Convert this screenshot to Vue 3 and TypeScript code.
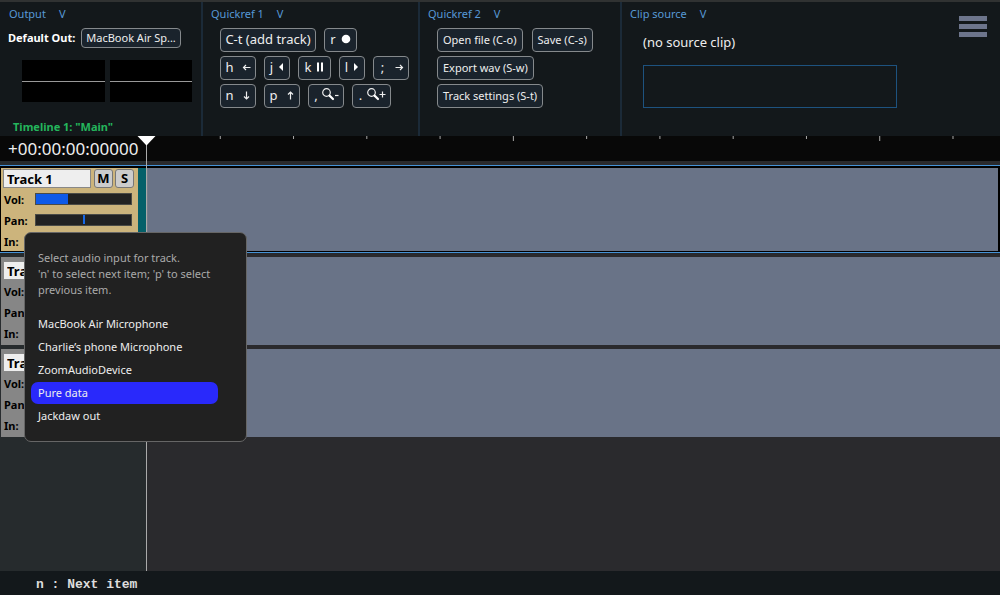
<script setup lang="ts">
import { ref } from 'vue'

type Glyph = 'record' | 'left' | 'back' | 'pause' | 'play' | 'right' | 'down' | 'up' | 'zoomOut' | 'zoomIn'

interface Key {
  key: string
  glyph?: Glyph
  label: string
  size: string
}

interface Track {
  name: string
  volume: number
  pan: number
}

const transportRows: Key[][] = [
  [
    { key: 'C-t (add track)', label: 'Add track', size: 'wide' },
    { key: 'r', glyph: 'record', label: 'Record', size: 'medium' },
  ],
  [
    { key: 'h', glyph: 'left', label: 'Move left', size: 'large' },
    { key: 'j', glyph: 'back', label: 'Play backward', size: 'small' },
    { key: 'k', glyph: 'pause', label: 'Pause', size: 'medium' },
    { key: 'l', glyph: 'play', label: 'Play', size: 'small' },
    { key: ';', glyph: 'right', label: 'Move right', size: 'large' },
  ],
  [
    { key: 'n', glyph: 'down', label: 'Next track', size: 'large' },
    { key: 'p', glyph: 'up', label: 'Previous track', size: 'large' },
    { key: ',', glyph: 'zoomOut', label: 'Zoom out', size: 'large' },
    { key: '.', glyph: 'zoomIn', label: 'Zoom in', size: 'xlarge' },
  ],
]

const fileRows: string[][] = [
  ['Open file (C-o)', 'Save (C-s)'],
  ['Export wav (S-w)'],
  ['Track settings (S-t)'],
]

const tracks = ref<Track[]>([
  { name: 'Track 1', volume: 34, pan: 50 },
  { name: 'Track 2', volume: 34, pan: 50 },
  { name: 'Track 3', volume: 34, pan: 50 },
])
const activeTrack = ref(0)

const inputs: string[] = [
  'MacBook Air Microphone',
  'Charlie’s phone Microphone',
  'ZoomAudioDevice',
  'Pure data',
  'Jackdaw out',
]
const selectedInput = ref(3)

const tickSpacing = 8.59
const ticks = Array.from({ length: 11 }, (_, i) => ({
  x: `${((i + 1) * tickSpacing).toFixed(2)}%`,
  length: (i + 1) % 5 === 0 ? 5 : 3,
}))
</script>

<template>
  <main class="app">
    <header class="panels">
      <section class="panel output">
        <h2 class="panel-title">Output <button class="chevron" aria-label="Choose panel">V</button></h2>
        <div class="default-out">
          <span id="default-out">Default Out:</span>
          <button class="key device" aria-describedby="default-out">MacBook Air Sp...</button>
        </div>
        <div class="meters">
          <div class="meter"></div>
          <div class="meter"></div>
        </div>
        <p class="timeline-name">Timeline 1: "Main"</p>
      </section>

      <section class="panel quick-one">
        <h2 class="panel-title">Quickref 1 <button class="chevron" aria-label="Choose panel">V</button></h2>
        <div class="key-rows">
          <div v-for="(row, r) in transportRows" :key="r" class="key-row">
            <button v-for="k in row" :key="k.key" class="key" :class="k.size" :aria-label="k.label">
              <span>{{ k.key }}</span>
              <svg v-if="k.glyph === 'record'" width="10" height="10" viewBox="0 0 10 10"><circle cx="5" cy="5" r="4.3" fill="#fff" /></svg>
              <svg v-else-if="k.glyph === 'back'" width="6" height="10" viewBox="0 0 6 10"><path d="M5 1v8L1 5z" fill="#fff" /></svg>
              <svg v-else-if="k.glyph === 'play'" width="6" height="10" viewBox="0 0 6 10"><path d="M1 1v8L5 5z" fill="#fff" /></svg>
              <svg v-else-if="k.glyph === 'pause'" width="8" height="10" viewBox="0 0 8 10"><path d="M1 .5h2v9H1zM5 .5h2v9H5z" fill="#fff" /></svg>
              <svg v-else-if="k.glyph === 'left'" width="9" height="9" viewBox="0 0 9 9"><path d="M8.500 4.500H1.500M4 2L1.500 4.500 4 7" class="stroke" /></svg>
              <svg v-else-if="k.glyph === 'right'" width="9" height="9" viewBox="0 0 9 9"><path d="M.5 4.500H7.500M5 2l2.500 2.500L5 7" class="stroke" /></svg>
              <svg v-else-if="k.glyph === 'down'" width="9" height="9" viewBox="0 0 9 9"><path d="M4.500 .5V8M2 5.500L4.500 8 7 5.500" class="stroke" /></svg>
              <svg v-else-if="k.glyph === 'up'" width="9" height="9" viewBox="0 0 9 9"><path d="M4.500 8.500V1M2 3.500L4.500 1 7 3.500" class="stroke" /></svg>
              <svg v-else-if="k.glyph" class="lens" :width="k.glyph === 'zoomIn' ? 20 : 18" height="14" :viewBox="k.glyph === 'zoomIn' ? '0 0 20 14' : '0 0 18 14'">
                <circle cx="4.500" cy="4.500" r="3.800" class="stroke" />
                <path d="M7.500 7.500L11 11" stroke="#fff" stroke-width="2.200" stroke-linecap="round" />
                <path v-if="k.glyph === 'zoomIn'" d="M12.500 6.500h6M15.500 3.500v6" class="stroke" />
                <path v-else d="M13 7.500h3.500" class="stroke" />
              </svg>
            </button>
          </div>
        </div>
      </section>

      <section class="panel quick-two">
        <h2 class="panel-title">Quickref 2 <button class="chevron" aria-label="Choose panel">V</button></h2>
        <div class="key-rows">
          <div v-for="(row, r) in fileRows" :key="r" class="key-row">
            <button v-for="label in row" :key="label" class="key">{{ label }}</button>
          </div>
        </div>
      </section>

      <section class="panel clip">
        <div class="clip-main">
          <h2 class="panel-title">Clip source <button class="chevron" aria-label="Choose panel">V</button></h2>
          <p class="clip-name">(no source clip)</p>
          <div class="clip-view"></div>
        </div>
        <button class="menu" aria-label="Menu"><i></i><i></i><i></i></button>
      </section>
    </header>

    <section class="timeline">
      <div class="ruler">
        <output class="timecode">+00:00:00:00000</output>
        <svg class="ticks" width="100%" height="25">
          <line v-for="t in ticks" :key="t.x" :x1="t.x" :x2="t.x" y1="0" :y2="t.length" stroke="#aaa" />
        </svg>
      </div>

      <div class="tracks">
        <article v-for="(track, i) in tracks" :key="i" class="track" :class="{ active: i === activeTrack }">
          <div class="controls">
            <div class="name-row">
              <input v-model="track.name" class="name" type="text" aria-label="Track name" />
              <button class="toggle" aria-label="Mute">M</button>
              <button class="toggle" aria-label="Solo">S</button>
            </div>
            <label class="control">
              <span>Vol:</span>
              <input v-model.number="track.volume" class="slider volume" type="range" min="0" max="100" :style="{ '--level': track.volume + '%' }" />
            </label>
            <label class="control">
              <span>Pan:</span>
              <input v-model.number="track.pan" class="slider" type="range" min="0" max="100" />
            </label>
            <div class="control"><span>In:</span></div>
          </div>
          <div class="strip"></div>
          <div class="lane"></div>
        </article>
      </div>

      <div class="playhead">
        <svg width="19" height="10" viewBox="0 0 19 10"><path d="M.5 0h18l-9 9.500z" fill="#fff" /></svg>
      </div>

      <div class="popup" role="dialog" aria-labelledby="popup-help">
        <p id="popup-help" class="help">Select audio input for track.<br />'n' to select next item; 'p' to select previous item.</p>
        <ul class="choices">
          <li v-for="(name, i) in inputs" :key="name">
            <button class="choice" :class="{ selected: i === selectedInput }" @click="selectedInput = i">{{ name }}</button>
          </li>
        </ul>
      </div>
    </section>

    <footer class="status">n : Next item</footer>
  </main>
</template>

<style>
body {
  background: #13181b;
}
</style>

<style scoped>
* {
  box-sizing: border-box;
}

.app {
  display: flex;
  flex-direction: column;
  min-height: 100vh;
  background: #13181b;
  color: #eee;
  font: 11px/16px "Noto Sans", "Open Sans", sans-serif;
}

button,
input {
  margin: 0;
  padding: 0;
  border: 0;
  background: none;
  color: inherit;
  font: inherit;
}

p,
h2,
ul {
  margin: 0;
  padding: 0;
}

.panels {
  display: grid;
  grid-template-columns: 203px 217px 202px 1fr;
  height: 136px;
  border-top: 2px solid #303232;
}

.panel {
  padding: 4px 8px 0;
  border-right: 2px solid #1b2a38;
}

.panel-title {
  display: flex;
  gap: 13px;
  color: #5799d6;
  font-size: 11px;
  font-weight: 400;
  line-height: 16px;
}

.output .panel-title {
  padding-left: 1px;
}

.default-out {
  display: flex;
  align-items: center;
  gap: 6px;
  margin-top: 6px;
  color: #fff;
  font-weight: 700;
}

.key {
  display: flex;
  align-items: center;
  justify-content: center;
  height: 24px;
  padding: 0 5px;
  border: 1px solid #85898c;
  border-radius: 4px;
  background: #1a232c;
  color: #eee;
  font-weight: 400;
  white-space: nowrap;
}

.device {
  height: 20px;
  padding: 0 4px;
}

.meters {
  display: grid;
  grid-template-columns: 1fr 1fr;
  gap: 5px;
  margin: 12px 1px 0 14px;
}

.meter {
  display: flex;
  align-items: center;
  height: 42px;
  background: #000;
}

.meter::before {
  flex: 1;
  height: 1px;
  background: #999;
  content: "";
}

.timeline-name {
  margin: 17px 0 0 5px;
  color: #24b55c;
  font-weight: 700;
}

.key-rows {
  display: grid;
  gap: 4px;
  margin: 6px 0 0 9px;
}

.key-row {
  display: flex;
  gap: 8px;
}

.quick-two .key-row {
  gap: 9px;
}

.quick-one .key {
  gap: 5px;
  padding: 0 0 2px;
  font-size: 13px;
}

.wide {
  width: 96px;
}

.small {
  width: 26px;
}

.medium {
  width: 33px;
}

.large {
  width: 36px;
}

.xlarge {
  width: 39px;
}

.quick-one .large,
.quick-one .xlarge {
  gap: 8px;
}

.large span,
.xlarge span {
  width: 8px;
}

.lens {
  margin-left: -6px;
}

.stroke {
  fill: none;
  stroke: #eee;
  stroke-width: 1.2;
}

.clip {
  display: flex;
  justify-content: space-between;
  padding-right: 13px;
  border: 0;
}

.clip-main {
  width: 267px;
}

.clip-name {
  margin: 12px 0 0 13px;
  font-size: 13px;
}

.clip-view {
  height: 43px;
  margin: 15px 0 0 13px;
  border: 1px solid #1d527f;
}

.menu {
  display: flex;
  flex-direction: column;
  gap: 3px;
  width: 28px;
  height: 21px;
  margin-top: 10px;
}

.menu i {
  width: 100%;
  height: 5px;
  background: #6d758c;
}

.timeline {
  position: relative;
  flex: 1;
  background: linear-gradient(90deg, #262b2d 147px, #2a2a2d 147px);
}

.ruler {
  display: grid;
  grid-template-columns: 147px 1fr;
  height: 25px;
  background: #080808;
}

.timecode {
  padding-left: 8px;
  color: #eee;
  font-size: 17px;
  line-height: 26px;
}

.tracks {
  display: grid;
  gap: 4px;
  padding-top: 4px;
}

.track {
  display: grid;
  grid-template-columns: 137px 9px 1fr;
  height: 88px;
  padding-left: 1px;
  background: #282c2f;
}

.track.active {
  padding: 2px 2px 1px 1px;
  border: solid #4592d6;
  border-width: 1px 0;
  background: #000;
}

.controls {
  padding: 4px 2px 0;
  background: #868686;
  color: #000;
  font-weight: 700;
}

.active .controls {
  padding-top: 1px;
  background: #ccb47c;
}

.strip {
  background: #046069;
}

.lane {
  border-left: 1px solid #747b88;
  background: #697387;
}

.name-row {
  display: flex;
  gap: 2px;
  height: 19px;
}

.name {
  width: 88px;
  margin-right: 1px;
  padding-left: 3px;
  border: 1px solid #888;
  background: #eee;
  color: #000;
  font-size: 13px;
  font-weight: 700;
}

.toggle {
  width: 19px;
  border: 1px solid #777;
  border-radius: 3px;
  background: #ccc;
  font-size: 13px;
  line-height: 17px;
}

.control {
  display: flex;
  align-items: center;
  height: 21px;
}

.control span {
  width: 32px;
  padding: 2px 0 0 1px;
}

.slider {
  width: 97px;
  height: 12px;
  border: 1px solid #4b4b46;
  background: #222;
  appearance: none;
}

.volume {
  background: linear-gradient(90deg, #0e5ae8 var(--level), #222 var(--level));
}

.slider::-webkit-slider-thumb {
  width: 2px;
  height: 9px;
  background: #1568e8;
  appearance: none;
}

.volume::-webkit-slider-thumb {
  opacity: 0;
}

.playhead {
  position: absolute;
  top: 0;
  bottom: 0;
  left: 137px;
  display: flex;
  justify-content: center;
  width: 19px;
  background: linear-gradient(#aaa, #aaa) center / 1px 100% no-repeat;
}

.popup {
  position: absolute;
  top: 96px;
  left: 24px;
  width: 223px;
  padding: 17px 28px 14px 6px;
  border: 1px solid #666;
  border-radius: 7px;
  background: #212121;
}

.help {
  padding-left: 7px;
  color: #aaa;
}

.choices {
  display: grid;
  gap: 1px;
  margin-top: 15px;
  list-style: none;
}

.choice {
  width: 100%;
  height: 22px;
  padding-left: 7px;
  border-radius: 7px;
  text-align: left;
}

.choice.selected {
  background: #2929fb;
}

.status {
  height: 24px;
  padding: 2px 0 0 36px;
  font: 700 13px/24px "Liberation Mono", monospace;
  color: #ddd;
}
</style>
